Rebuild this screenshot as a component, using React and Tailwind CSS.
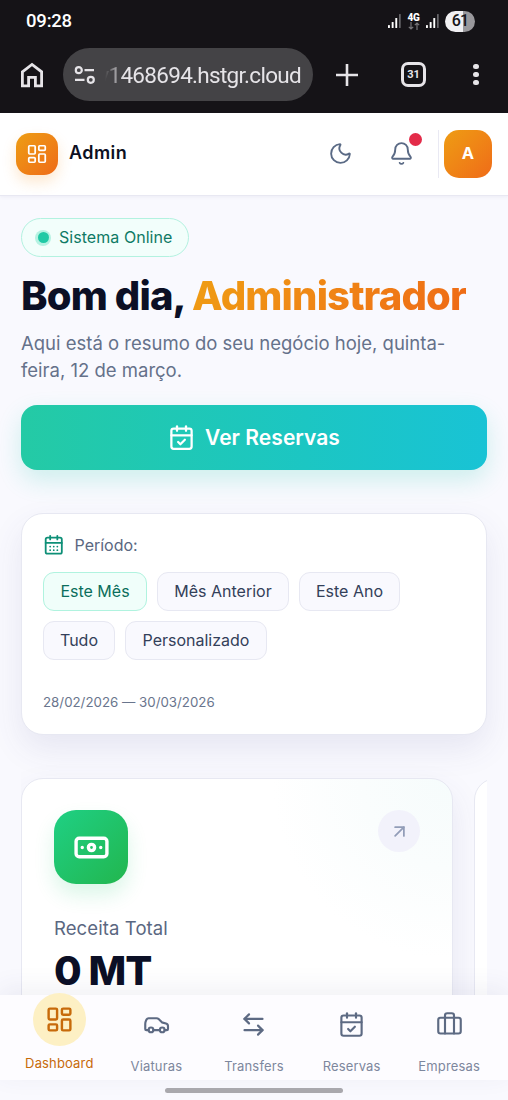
import {
  LayoutDashboard, Moon, Bell, CalendarCheck, CalendarDays,
  Banknote, ArrowUpRight, ArrowLeftRight, Briefcase
} from 'lucide-react'

const periodos = [
  { label: 'Este Mês', w: 'w-[104px]', active: true },
  { label: 'Mês Anterior', w: 'w-[132px]' },
  { label: 'Este Ano', w: 'w-[101px]' },
  { label: 'Tudo', w: 'w-[72px]' },
  { label: 'Personalizado', w: 'w-[142px]' },
]

const nav = [
  { icon: Van, label: 'Viaturas' },
  { icon: ArrowLeftRight, label: 'Transfers' },
  { icon: CalendarCheck, label: 'Reservas' },
  { icon: Briefcase, label: 'Empresas' },
]

function Van({ size, strokeWidth }) {
  return (
    <svg width={size} height={size} viewBox="0 0 24 24" fill="none" stroke="currentColor"
      strokeWidth={strokeWidth} strokeLinecap="round" strokeLinejoin="round">
      <path d="M5 17H3a1 1 0 0 1-1-1v-4.4c0-1.2.2-2.100.7-3.100l.6-1.200c.3-.6.9-.9 1.600-.9h7.200c.7 0 1.300.3 1.800.8l2.900 2.900 3.600 1c1.100.3 1.800 1.100 1.800 2.200V16a1 1 0 0 1-1 1H19.200M9.200 17H15" />
      <circle cx="7.1" cy="16.8" r="2.100" />
      <circle cx="17.1" cy="16.8" r="2.100" />
    </svg>
  )
}

function Signal() {
  return (
    <svg width="13" height="14" viewBox="0 0 13 14" fill="#fff">
      <rect x="0" y="11" width="1.9" height="3" rx=".6" />
      <rect x="3.7" y="8" width="1.9" height="6" rx=".6" />
      <rect x="7.3" y="4" width="1.9" height="10" rx=".6" />
      <rect x="11" y="0" width="1.7" height="14" rx=".6" fill="#68676b" />
    </svg>
  )
}

function StatusBar() {
  return (
    <div className="flex h-[42px] items-center justify-between pl-[26px] pr-8 font-['Roboto',sans-serif] text-white">
      <span className="text-[18.5px] font-medium leading-none tracking-[-0.2px]">09:28</span>
      <div className="flex items-center">
        <Signal />
        <div className="ml-[6px] flex w-[13px] flex-col items-center">
          <span className="text-[10px] font-black leading-[9px] tracking-[-0.3px]">4G</span>
          <svg width="12" height="8" viewBox="0 0 12 8" fill="none" stroke="#77767a" strokeWidth="1.2">
            <path d="M3 0v7M.8 4.8 3 7l2.2-2.2M9 8V1M6.8 3.2 9 1l2.2 2.2" />
          </svg>
        </div>
        <span className="ml-[6px]"><Signal /></span>
        <div className="ml-[6px] mr-px flex h-[21px] w-[30px] items-center justify-center rounded-full bg-linear-to-r from-[#f1f0f3] from-60% to-[#99989c] to-60%">
          <span className="text-[16px] font-medium leading-none tracking-[-0.8px] text-[#151418]">61</span>
        </div>
      </div>
    </div>
  )
}

function BrowserBar() {
  return (
    <div className="flex h-[71px] items-start pt-[6px] font-['Roboto',sans-serif] text-[#e6e4e8]">
      <div className="flex h-[53px] w-[63px] items-center pl-5">
        <svg width="24" height="26" viewBox="0 0 24 26" fill="none" stroke="currentColor" strokeWidth="2.8">
          <path d="M2.4 9.8 12 2.4l9.6 7.4v14h-6.2v-8.4H8.6v8.4H2.4z" />
        </svg>
      </div>
      <div className="flex h-[53px] w-[250px] items-center justify-between rounded-full bg-[#444346] pl-[11px] pr-[12px]">
        <svg className="shrink-0" width="22" height="18" viewBox="0 0 22 18" fill="none" stroke="currentColor" strokeWidth="2.2">
          <circle cx="4.8" cy="4.2" r="3" />
          <path d="M10.5 4.2H20M1 13.8h9.5" />
          <circle cx="16.8" cy="13.8" r="3" />
        </svg>
        <span className="whitespace-nowrap text-[22.5px] leading-[30px] tracking-[-0.7px] mask-[linear-gradient(90deg,transparent_7px,black_26px)]">v1468694.hstgr.cloud</span>
      </div>
      <div className="flex h-[53px] flex-1 items-center">
        <svg className="ml-[23px]" width="22" height="22" viewBox="0 0 22 22" stroke="currentColor" strokeWidth="2.6">
          <path d="M11 0v22M0 11h22" />
        </svg>
        <div className="ml-[43px] flex size-[25px] items-center justify-center rounded-[7px] border-3 border-current text-[11px] font-bold leading-none">31</div>
        <div className="ml-[47px] flex flex-col gap-[2.5px]">
          <i className="size-[5.5px] rounded-full bg-current" />
          <i className="size-[5.5px] rounded-full bg-current" />
          <i className="size-[5.5px] rounded-full bg-current" />
        </div>
      </div>
    </div>
  )
}

function Header() {
  return (
    <header className="flex h-[83px] shrink-0 items-center border-b border-[#e8e8f2] bg-white px-4 pb-px shadow-[0_1px_4px_rgba(80,80,140,0.08)]">
      <div className="flex size-[42px] items-center justify-center rounded-[14px] bg-linear-135 from-[#ed9d13] to-[#ee6a18] text-white shadow-[0_7px_14px_rgba(245,150,40,0.22)]">
        <LayoutDashboard size={22} strokeWidth={1.9} />
      </div>
      <span className="ml-[11px] pb-[2px] text-[18px] font-semibold tracking-[0.45px] text-[#0c1022]">Admin</span>
      <Moon className="ml-auto text-[#5a6a85]" size={25} strokeWidth={1.8} />
      <div className="relative ml-[36px] text-[#5a6a85]">
        <Bell size={25} strokeWidth={1.8} />
        <span className="absolute -top-[8px] left-[20px] size-[13px] rounded-full bg-[#e32b49]" />
      </div>
      <div className="ml-[24px] h-12 w-px bg-[#e9e9f3]" />
      <div className="ml-[5px] flex size-[48px] items-center justify-center rounded-[15px] bg-linear-135 from-[#ee9c13] to-[#ef6b18] text-[16.5px] font-bold text-white">A</div>
    </header>
  )
}

function Periodo() {
  return (
    <section className="mt-[43px] h-[222px] rounded-[22px] border border-[#e7e8f2] bg-white px-[21px] pt-[19px] shadow-[0_14px_32px_rgba(70,70,140,0.1)]">
      <div className="flex h-6 items-center text-[#5a6781]">
        <CalendarDays className="text-[#0e8f77]" size={21.5} strokeWidth={2} />
        <span className="ml-[10px] text-[16px]">Período:</span>
      </div>
      <div className="mt-[15px] flex flex-wrap gap-x-[10px] gap-y-[10px]">
        {periodos.map(({ label, w, active }) => (
          <button key={label}
            className={`h-[39px] rounded-[11px] border pb-[2px] text-[16px] ${w} ${
              active
                ? 'border-[#b0f3df] bg-[#f0fefa] text-[#0b6e5c]'
                : 'border-[#e7e8f2] bg-[#f9f9fe] text-[#334059]'
            }`}>
            {label}
          </button>
        ))}
      </div>
      <p className="mt-[32px] text-[13.3px] leading-5 text-[#69758d]">28/02/2026 — 30/03/2026</p>
    </section>
  )
}

function Receita() {
  return (
    <div className="mt-[43px] flex h-[330px] gap-[21px] overflow-x-clip">
      <article className="w-[432px] shrink-0 rounded-[22px] border border-[#e7e8f2] bg-white bg-[radial-gradient(circle_at_100%_0%,#f6fcfc_0px,#fafdfd_90px,#ffffff_180px)] px-8 pt-[31px] shadow-[0_14px_32px_rgba(70,70,140,0.1)]">
        <div className="flex items-start justify-between">
          <div className="flex size-[74px] items-center justify-center rounded-[22px] bg-linear-135 from-[#1fd084] to-[#22b64d] text-white shadow-[0_11px_20px_rgba(34,200,110,0.16)]">
            <Banknote size={37} strokeWidth={2.2} />
          </div>
          <div className="flex size-[42px] items-center justify-center rounded-full bg-[#f2f2fb] text-[#929db8]">
            <ArrowUpRight size={21} strokeWidth={2} />
          </div>
        </div>
        <p className="mt-[30px] text-[18.5px] leading-7 tracking-[0.1px] text-[#5a6781]">Receita Total</p>
        <p className="mt-[8px] text-[40px] font-extrabold leading-[42px] tracking-[-1px] text-[#0b0f25]">0 MT</p>
      </article>
      <article className="w-[432px] shrink-0 rounded-[22px] border border-[#e7e8f2] bg-white" />
    </div>
  )
}

function BottomNav() {
  return (
    <nav className="relative h-[105px] shrink-0 bg-[#f9f9fe]">
      <div className="grid h-[85px] grid-cols-5 bg-[#fdfcff] px-[10px] shadow-[0_-6px_24px_rgba(60,60,110,0.08)]">
        <div className="-mt-[2px] ml-px flex flex-col items-center text-[#c76a0a]">
          <div className="flex size-[53px] items-center justify-center rounded-full bg-[#fdf0c4]">
            <LayoutDashboard size={29} strokeWidth={2} />
          </div>
          <span className="mt-[7px] text-[13px] leading-5 tracking-[0.15px]">Dashboard</span>
        </div>
        {nav.map(({ icon: Icon, label }) => (
          <div key={label} className="flex flex-col items-center pt-[16px] text-[#5d6a83]">
            <Icon size={27} strokeWidth={1.9} />
            <span className="mt-[18px] text-[13px] leading-5 tracking-[0.15px] text-[#7d879d]">{label}</span>
          </div>
        ))}
      </div>
      <div className="mx-auto mt-[8px] h-[5px] w-[178px] rounded-full bg-[#a9a8ad]" />
    </nav>
  )
}

export default function App() {
  return (
    <div className="flex h-[1100px] w-[508px] flex-col overflow-hidden bg-[#f9f9fe] font-['Inter',sans-serif]">
      <div className="h-[113px] shrink-0 bg-[#151317]">
        <StatusBar />
        <BrowserBar />
      </div>
      <Header />
      <main className="min-h-0 flex-1 overflow-hidden px-[21px] pt-[22px]">
        <div className="flex h-[39px] w-[168px] items-center rounded-full border border-[#b3f2e0] bg-[#f2fefb] pl-[13px] text-[#0f7a65]">
          <span className="flex size-4 items-center justify-center rounded-full bg-[#b5f2e2]">
            <i className="size-[11px] rounded-full bg-[#20c9a5]" />
          </span>
          <span className="ml-[8px] pb-[2px] text-[16px] tracking-[0.05px]">Sistema Online</span>
        </div>

        <h1 className="mt-[15px] whitespace-nowrap text-[40px] font-extrabold leading-[48px] tracking-[-0.85px] text-[#0b0f25]">
          Bom dia, <span className="bg-linear-135 from-[#ef9f13] to-[#ee6716] bg-clip-text text-transparent">Administrador</span>
        </h1>
        <p className="mt-[10px] text-[18.5px] leading-[27px] text-[#65718a]">
          Aqui está o resumo do seu negócio hoje, quinta-<br />feira, 12 de março.
        </p>

        <button className="mt-[21px] flex h-[65px] w-full items-center justify-center rounded-[16px] bg-linear-to-r from-[#24caa5] to-[#19c3d5] text-white shadow-[0_10px_24px_rgba(32,200,170,0.2)]">
          <CalendarCheck size={27} strokeWidth={2} />
          <span className="ml-[10px] text-[21px] font-semibold tracking-[0.05px]">Ver Reservas</span>
        </button>

        <Periodo />
        <Receita />
      </main>
      <BottomNav />
    </div>
  )
}
